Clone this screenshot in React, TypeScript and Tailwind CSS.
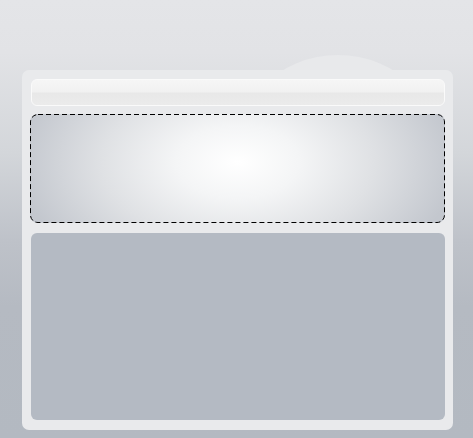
import React from 'react';

const App: React.FC = () => {
  return (
    <div
      className="relative w-full h-[438px] overflow-hidden pt-[70px] pl-[22px]"
      style={{ fontFamily: "'Liberation Sans', Arial, sans-serif" }}
    >
      {/* ── Backdrop ── */}
      <div className="absolute inset-0 bg-[linear-gradient(180deg,#e4e5e8_0%,#e2e3e6_12%,#d3d6da_35%,#bec2c9_55%,#b5bac2_70%,#b3b9c1_100%)]" />

      {/* ── Dome behind the frame ── */}
      <div className="absolute left-[230px] top-[55px] w-[216px] h-[216px] rounded-full bg-[#e8e9eb]" />

      {/* ── Frame ── */}
      <div className="relative w-[431px] h-[360px] rounded-[7px] bg-[#e9eaec] pt-[9px] pl-[9px] pr-[8px] pb-[10px] flex flex-col">
        {/* Top bar */}
        <div className="h-[27px] rounded-[6px] border border-[#fafafa] bg-[linear-gradient(180deg,#f6f6f6_0%,#f1f1f1_48%,#e8e8e8_52%,#ebebeb_100%)]" />

        {/* Drop zone */}
        <div className="relative mt-[8px] -ml-px h-[109px] rounded-[8px] bg-[radial-gradient(ellipse_220px_130px_at_50%_44%,#ffffff_0%,#f4f5f6_28%,#dfe1e4_62%,#c3c7ce_100%)]">
          {/* dashed outline */}
          <svg className="absolute inset-0 w-full h-full" fill="none">
            <rect
              x="0.5"
              y="0.5"
              width="414"
              height="108"
              rx="7.5"
              stroke="#000"
              strokeWidth="1"
              strokeDasharray="5 3"
            />
          </svg>
        </div>

        {/* Content area */}
        <div className="mt-[10px] flex-1 rounded-[6px] bg-[#b4bac3]" />
      </div>
    </div>
  );
};

export default App;
